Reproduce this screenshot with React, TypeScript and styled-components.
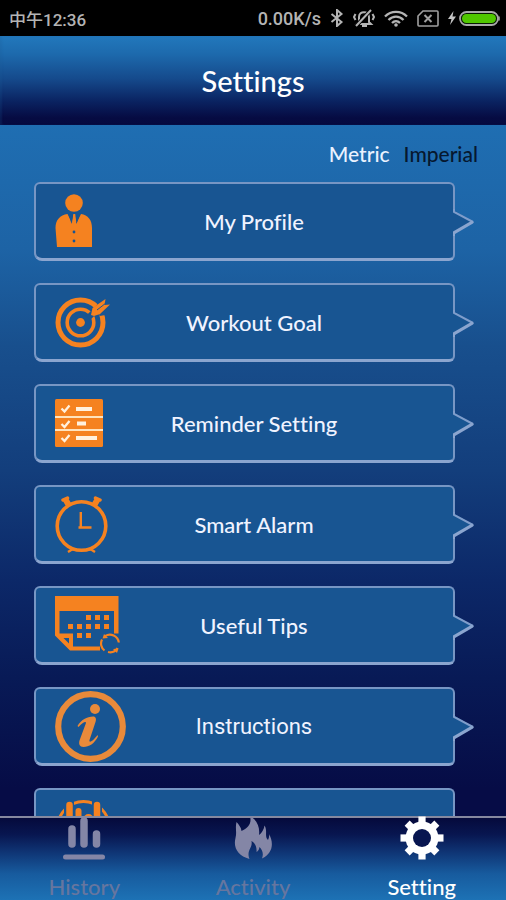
import React from "react";
import styled, { createGlobalStyle } from "styled-components";

const ORANGE = "#f58220";
const FILL = "#185592";
const DISPLAY = `Lato, "Noto Sans", sans-serif`;
const SYSTEM = `Roboto, "Noto Sans CJK SC", sans-serif`;

const GlobalStyle = createGlobalStyle`
  *, *::before, *::after { box-sizing: border-box; }
  body { margin: 0; background: #060c44; }
  button { border: 0; padding: 0; margin: 0; background: none; cursor: pointer; font-variant-ligatures: none; }
  svg { display: block; flex: none; }
`;

const Screen = styled.div`
  display: flex;
  flex-direction: column;
  height: 100vh;
  font-family: ${DISPLAY};
  font-variant-ligatures: none;
  color: #f0f3ff;
`;

const StatusBar = styled.div`
  display: flex;
  align-items: center;
  justify-content: space-between;
  flex: none;
  height: 36px;
  padding: 0 6px 0 9px;
  background: #000;
  color: #b4b4b4;
  font-family: ${SYSTEM};
  font-size: 18px;
  font-weight: 500;
`;

const Clock = styled.time`
  font-size: 17px;
`;

const StatusIcons = styled.div`
  display: flex;
  align-items: center;
  gap: 9px;
`;

const Power = styled.div`
  display: flex;
  align-items: center;
  gap: 3px;
`;

const Header = styled.header`
  display: flex;
  align-items: center;
  justify-content: center;
  flex: none;
  height: 89px;
  background: linear-gradient(#2278bc 0%, #1d6aad 20%, #154a8c 48%, #0a2260 74%, #060b42 92%, #050a40 100%);
  box-shadow: inset 2px 0 2px rgba(30, 90, 150, 0.2);
`;

const Title = styled.h1`
  margin: 0;
  font-size: 29px;
  line-height: 36px;
  font-weight: 500;
  color: #fff;
`;

const Content = styled.main`
  flex: 1;
  min-height: 0;
  overflow-y: auto;
  scrollbar-width: none;
  background: linear-gradient(#1f6eb2 0%, #1d63a5 18%, #184f8d 32%, #133e7c 50%, #0c2868 66%, #081a56 80%, #060c46 96%);
`;

const Units = styled.div`
  display: flex;
  justify-content: flex-end;
  gap: 14px;
  padding: 16px 28px 15px;
`;

const UnitButton = styled.button<{ $active?: boolean }>`
  font-family: ${DISPLAY};
  font-size: 21px;
  line-height: 26px;
  font-weight: 500;
  color: ${(p) => (p.$active ? "#eaf2ff" : "#06182f")};
`;

const List = styled.div`
  display: flex;
  flex-direction: column;
  gap: 22px;
  padding: 0 51px 22px 34px;
`;

const Card = styled.button`
  position: relative;
  display: grid;
  align-items: center;
  height: 79px;
  padding: 0 0 0 19px;
  border: 2px solid #7796c4;
  border-bottom: 3px solid #8ba5cf;
  border-radius: 6px 6px 6px 8px;
  background: ${FILL};
  color: #f0f3ff;
`;

const CardIcon = styled.span`
  grid-area: 1 / 1;
  justify-self: start;
`;

const CardLabel = styled.span<{ $system?: boolean }>`
  grid-area: 1 / 1;
  justify-self: center;
  padding-top: 1px;
  font-family: ${(p) => (p.$system ? SYSTEM : DISPLAY)};
  font-size: 22px;
  line-height: 28px;
  font-weight: ${(p) => (p.$system ? 400 : 500)};
`;

const Pointer = styled.svg`
  position: absolute;
  right: -22px;
  top: 24px;
`;

const Nav = styled.nav`
  display: grid;
  grid-template-columns: repeat(3, 1fr);
  flex: none;
  height: 84px;
  border-top: 2px solid #85889f;
  background: linear-gradient(#050a3c 0%, #081650 20%, #0f3575 42%, #175b9e 68%, #1d72b5 100%);
`;

const Tab = styled.button<{ $active?: boolean }>`
  display: flex;
  flex-direction: column;
  align-items: center;
  justify-content: space-between;
  font-family: ${DISPLAY};
  font-size: 22px;
  line-height: 26px;
  font-weight: 500;
  color: ${(p) => (p.$active ? "#fff" : "#66769f")};

  svg {
    margin-top: -2px;
    color: ${(p) => (p.$active ? "#fff" : "#8486a6")};
  }
`;

const ProfileIcon = () => (
  <svg width="38" height="54" viewBox="0 0 38 54" fill={ORANGE}>
    <circle cx="19" cy="9" r="8.8" />
    <path d="M12.5 20 L17 29 L18.5 21 H20 L21.5 29 L26 20 C33 21 37 26 37 34 V53 H2 L.5 34 C.5 26 5 21 12.5 20Z" />
    <path d="M13.5 20 L16.5 30 L18 22Z M25 20 L21.5 30 L20 22Z" fill={FILL} />
    <path d="M18.3 20 H20.2 L21.2 28 L19.2 31 L17.4 28Z" />
    <circle cx="19" cy="38" r="1.4" fill={FILL} />
    <circle cx="19" cy="47" r="1.4" fill={FILL} />
  </svg>
);

const GoalIcon = () => (
  <svg width="56" height="52" viewBox="0 0 56 52" fill="none" stroke={ORANGE}>
    <circle cx="25.5" cy="26.5" r="22.5" strokeWidth="5" />
    <circle cx="25.5" cy="26.5" r="13.3" strokeWidth="3.6" />
    <circle cx="25.5" cy="26.5" r="4.4" fill={ORANGE} stroke="none" />
    <path d="M33 22 L48 7 M44 17 L50 16" stroke={FILL} strokeWidth="6" />
    <path d="M36 19 L37.5 12 L50.5 3 L49.5 9 L55 8.5 L45 18 L39 20Z" fill={ORANGE} stroke="none" />
    <path d="M42 14 L51 7" stroke={FILL} strokeWidth="1" />
  </svg>
);

const ReminderIcon = () => (
  <svg width="48" height="48" viewBox="0 0 48 48">
    <rect width="48" height="48" rx="1.5" fill={ORANGE} />
    <path d="M0 18H48M0 31H48" stroke="#ffe3bd" strokeWidth="2" />
    <path d="M21 10H37M22 24.5H31M21 39H42" stroke="#fff1de" strokeWidth="4" />
    <path
      d="M6.5 9.5L9.5 12.5L14.5 6.5M6.5 25L9.5 28L14.5 22M6.5 39L9.5 42L14.5 36"
      stroke="#fff1de"
      strokeWidth="2.3"
      fill="none"
    />
  </svg>
);

const AlarmIcon = () => (
  <svg width="53" height="57" viewBox="0 0 53 57" fill="none" stroke={ORANGE}>
    <circle cx="26.5" cy="30" r="24.3" strokeWidth="3.6" />
    <path d="M25.8 16V31.5M23.5 31.5H36.5" strokeWidth="2.4" />
    <path d="M10.5 3.5L14 9.500M42.5 3.5L39 9.500" strokeWidth="6" strokeLinejoin="round" />
    <path d="M8 4L12.500 2M45 4L40.500 2" strokeWidth="3.500" strokeLinecap="round" />
    <path d="M13 56L17 53.500H22M40 56L36 53.500H31" strokeWidth="2.4" />
  </svg>
);

const TipsIcon = () => (
  <svg width="66" height="58" viewBox="0 0 66 58">
    <path
      d="M0 0H63.5V37.5H59V15H4.5V37.5H18V50.5H45V54.5H15L0 39.5Z M8.5 42L14 47.5V42Z"
      fill={ORANGE}
      fillRule="evenodd"
    />
    <g fill={ORANGE}>
      {[31, 40, 49].map((x) => (
        <rect key={x} x={x} y="19" width="5" height="5" />
      ))}
      {[13, 22, 31, 40, 49].map((x) => (
        <rect key={x} x={x} y="28" width="5" height="5" />
      ))}
      {[22, 31].map((x) => (
        <rect key={x} x={x} y="37" width="5" height="5" />
      ))}
    </g>
    <circle cx="55" cy="47.5" r="10" fill={FILL} />
    <path
      d="M49.500 54.500A8.800 8.800 0 0 1 47 43.500M50 40.200A8.800 8.800 0 0 1 63.800 46.500M62.500 52A8.800 8.800 0 0 1 53 56"
      fill="none"
      stroke={ORANGE}
      strokeWidth="2.2"
    />
    <path d="M47.500 42.500L49 38L53 42ZM63.500 52.500L62 57L58 53Z" fill={ORANGE} />
  </svg>
);

const InfoIcon = () => (
  <svg width="71" height="71" viewBox="0 0 71 71">
    <circle cx="35.5" cy="35.5" r="32.3" fill="none" stroke="#e98a3a" strokeWidth="6.2" />
    <g fill="#e98a3a">
      <circle cx="40" cy="18" r="5" />
      <path d="M22.5 35C26 29 32 25.5 38 25.5C41 25.5 41.5 28 40.5 31L34.5 49C33.8 51.5 36.5 52 42.5 44L43 45.5C39.5 52.5 34 56 28.5 56C24.5 56 23.5 53 24.5 49.5L30.8 32.5C31.5 30 28.5 30.5 23.5 36Z" />
    </g>
  </svg>
);

const DeviceIcon = () => (
  <svg width="56" height="56" viewBox="0 0 56 56" fill="none" stroke={ORANGE}>
    <circle cx="28.5" cy="28" r="25.5" strokeWidth="3" />
    <path d="M14 0V50M42 0V50" stroke={FILL} strokeWidth="10" />
    <path d="M14.5 6V48M42 6V48" strokeWidth="6.5" strokeLinecap="round" />
    <path d="M23.5 12V46" strokeWidth="6" strokeLinecap="round" />
    <circle cx="33.5" cy="20" r="5" fill={ORANGE} stroke="none" />
  </svg>
);

const HistoryIcon = () => (
  <svg width="44" height="44" viewBox="0 0 44 44" stroke="currentColor" strokeLinecap="round">
    <path d="M10 13V28M22 5V28M34.5 18V28" strokeWidth="7.5" />
    <path d="M3.5 41H40.5" strokeWidth="5" />
  </svg>
);

const FlameIcon = () => (
  <svg width="44" height="44" viewBox="0 0 44 44" fill="currentColor">
    <path d="M19 0C26 4 29 11 28 19C31 17 33 13 33.5 9.5C37 15 33 20 37 24C38 22 38.5 20 38 18C43 27 42 37 31 42.5C33 37 31 34 28.5 31C28 34 27 35 25.5 36C26 31 24 27 20.5 25C22 32 15 34 18.5 43C7 40 2 32 4.500 22C6 16 4 12 5.500 6C8 9 10 11 10.500 15C17 12 21 8 19 0Z" />
  </svg>
);

const GearIcon = () => (
  <svg width="44" height="44" viewBox="-22 -22 44 44" fill="currentColor">
    {[0, 45, 90, 135].map((a) => (
      <rect key={a} x="-3.6" y={a % 90 ? -21 : -21.5} width="7.2" height={a % 90 ? 42 : 43} transform={`rotate(${a})`} />
    ))}
    <circle r="16.5" />
    <circle r="9" fill="#081650" />
  </svg>
);

const BluetoothIcon = () => (
  <svg width="14" height="18" viewBox="0 0 14 18" fill="none" stroke="#b4b4b4" strokeWidth="2">
    <path d="M1.5 5L11.5 13L7 17V1L11.5 5L1.5 13" />
  </svg>
);

const MutedIcon = () => (
  <svg width="22" height="18" viewBox="0 0 22 18" fill="none" stroke="#b4b4b4" strokeWidth="2">
    <path d="M6 13V8C6 1.5 16 1.5 16 8V13L18 15H4ZM9 17H14M2.5 5L1 8L2.5 11M19.5 5L21 8L19.5 11" />
    <path d="M3 17L18 1" stroke="#000" strokeWidth="4" />
    <path d="M3 17L18 1" />
  </svg>
);

const WifiIcon = () => (
  <svg width="24" height="17" viewBox="0 0 24 17" fill="none" stroke="#b4b4b4" strokeWidth="2.3">
    <path d="M1 6.5C7 .3 17 .3 23 6.5M4.5 10C9 5.5 15 5.5 19.5 10M8 13C10.5 10.5 13.5 10.5 16 13" />
    <circle cx="12" cy="15" r="1.8" fill="#b4b4b4" stroke="none" />
  </svg>
);

const NoSimIcon = () => (
  <svg width="22" height="17" viewBox="0 0 22 17" fill="none" stroke="#a0a0a0" strokeWidth="1.6">
    <path d="M6 1H20Q21 1 21 2V15Q21 16 20 16H2Q1 16 1 15V6Z" />
    <path d="M7.5 5L14.5 12M14.5 5L7.5 12" strokeWidth="2" />
  </svg>
);

const BoltIcon = () => (
  <svg width="8" height="14" viewBox="0 0 8 14" fill="#c4c4c4">
    <path d="M5.5 0L0 8H3.5L2 14L8 5.5H4.5Z" />
  </svg>
);

const BatteryIcon = () => (
  <svg width="41" height="15" viewBox="0 0 41 15">
    <rect x="1" y="1" width="38" height="13" rx="6.5" fill="#071a02" stroke="#a8a8a8" strokeWidth="1.8" />
    <rect x="3" y="3" width="34" height="9" rx="4.5" fill="#50c800" />
    <path d="M40 5.5V9.5" stroke="#a8a8a8" strokeWidth="1.5" />
  </svg>
);

const items = [
  { label: "My Profile", Icon: ProfileIcon },
  { label: "Workout Goal", Icon: GoalIcon },
  { label: "Reminder Setting", Icon: ReminderIcon },
  { label: "Smart Alarm", Icon: AlarmIcon },
  { label: "Useful Tips", Icon: TipsIcon },
  { label: "Instructions", Icon: InfoIcon, system: true },
  { label: "", Icon: DeviceIcon },
];

const tabs = [
  { label: "History", Icon: HistoryIcon },
  { label: "Activity", Icon: FlameIcon },
  { label: "Setting", Icon: GearIcon },
];

export default function App() {
  const [unit, setUnit] = React.useState("Metric");
  const [tab, setTab] = React.useState("Setting");

  return (
    <Screen>
      <GlobalStyle />
      <StatusBar>
        <Clock>中午12:36</Clock>
        <StatusIcons>
          <span>0.00K/s</span>
          <BluetoothIcon />
          <MutedIcon />
          <WifiIcon />
          <NoSimIcon />
          <Power>
            <BoltIcon />
            <BatteryIcon />
          </Power>
        </StatusIcons>
      </StatusBar>
      <Header>
        <Title>Settings</Title>
      </Header>
      <Content>
        <Units>
          {["Metric", "Imperial"].map((u) => (
            <UnitButton key={u} $active={u === unit} aria-pressed={u === unit} onClick={() => setUnit(u)}>
              {u}
            </UnitButton>
          ))}
        </Units>
        <List>
          {items.map(({ label, Icon, system }) => (
            <Card key={label} aria-label={label || "Device"}>
              <CardIcon>
                <Icon />
              </CardIcon>
              {label && <CardLabel $system={system}>{label}</CardLabel>}
              <Pointer width="24" height="28" viewBox="0 0 24 28">
                <path d="M1 3H4L22 14L4 25H1Z" fill={FILL} />
                <path d="M3 1V4L22 14" fill="none" stroke="#7f9dcb" strokeWidth="2" />
                <path d="M2 23.500L21 12.500L23 14L22 15.500L4 26V28H2Z" fill="#8ba5cf" />
              </Pointer>
            </Card>
          ))}
        </List>
      </Content>
      <Nav>
        {tabs.map(({ label, Icon }) => (
          <Tab key={label} $active={label === tab} aria-current={label === tab ? "page" : undefined} onClick={() => setTab(label)}>
            <Icon />
            {label}
          </Tab>
        ))}
      </Nav>
    </Screen>
  );
}
